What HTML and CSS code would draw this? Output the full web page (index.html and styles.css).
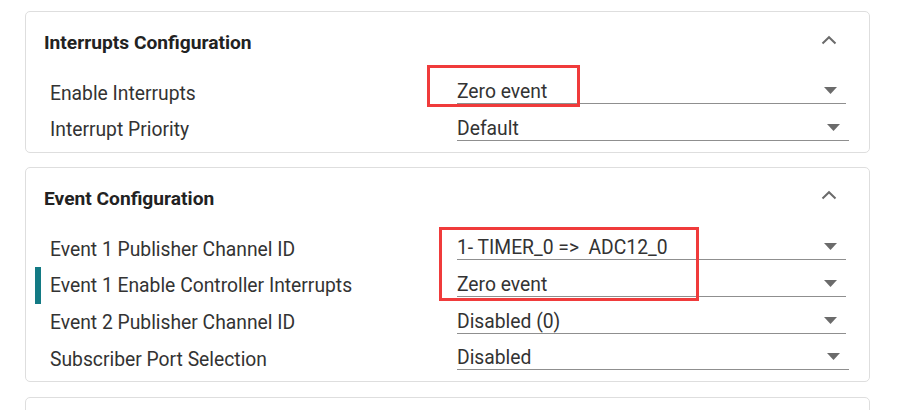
FILE: index.html
```html
<!DOCTYPE html>
<html>
<head>
<meta charset="utf-8">
<link rel="stylesheet" href="styles.css">
</head>
<body>
<div class="page">
  <section class="card">
    <div class="card-header">
      <h2 class="card-title">Interrupts Configuration</h2>
      <svg class="chevron" width="16" height="10" viewBox="0 0 16 10"><polyline points="1.5,8.5 8,2.2 14.5,8.5" fill="none" stroke="#6b6b6b" stroke-width="2"/></svg>
    </div>
    <div class="row">
      <div class="label">Enable Interrupts</div>
      <div class="field"><span class="value">Zero event</span><svg class="drop" width="13" height="7" viewBox="0 0 13 7"><path d="M0 0h13L6.5 7z" fill="#6b6b6b"/></svg></div>
    </div>
    <div class="row">
      <div class="label">Interrupt Priority</div>
      <div class="field wide"><span class="value">Default</span><svg class="drop" width="13" height="7" viewBox="0 0 13 7"><path d="M0 0h13L6.5 7z" fill="#6b6b6b"/></svg></div>
    </div>
  </section>

  <section class="card">
    <div class="card-header">
      <h2 class="card-title">Event Configuration</h2>
      <svg class="chevron" width="16" height="10" viewBox="0 0 16 10"><polyline points="1.5,8.5 8,2.2 14.5,8.5" fill="none" stroke="#6b6b6b" stroke-width="2"/></svg>
    </div>
    <div class="row">
      <div class="label">Event 1 Publisher Channel ID</div>
      <div class="field"><span class="value">1- TIMER_0 =&gt;  ADC12_0</span><svg class="drop" width="13" height="7" viewBox="0 0 13 7"><path d="M0 0h13L6.5 7z" fill="#6b6b6b"/></svg></div>
    </div>
    <div class="row active">
      <span class="marker"></span>
      <div class="label">Event 1 Enable Controller Interrupts</div>
      <div class="field"><span class="value">Zero event</span><svg class="drop" width="13" height="7" viewBox="0 0 13 7"><path d="M0 0h13L6.5 7z" fill="#6b6b6b"/></svg></div>
    </div>
    <div class="row">
      <div class="label">Event 2 Publisher Channel ID</div>
      <div class="field"><span class="value">Disabled (0)</span><svg class="drop" width="13" height="7" viewBox="0 0 13 7"><path d="M0 0h13L6.5 7z" fill="#6b6b6b"/></svg></div>
    </div>
    <div class="row">
      <div class="label">Subscriber Port Selection</div>
      <div class="field wide"><span class="value">Disabled</span><svg class="drop" width="13" height="7" viewBox="0 0 13 7"><path d="M0 0h13L6.5 7z" fill="#6b6b6b"/></svg></div>
    </div>
  </section>

  <section class="card card-next"></section>

  <div class="highlight hl-1"></div>
  <div class="highlight hl-2"></div>
</div>
</body>
</html>
```

FILE: styles.css
```css
html, body {
  margin: 0;
  padding: 0;
  background: #ffffff;
  overflow: hidden;
}

body {
  font-family: Roboto, "Liberation Sans", Arial, sans-serif;
  color: #333333;
  width: 919px;
  height: 410px;
}

.page {
  position: relative;
  padding: 11px 0 0 25px;
  width: 845px;
  height: 399px;
  display: flex;
  flex-direction: column;
  gap: 14px;
  overflow: hidden;
}

.card {
  flex: none;
  border: 1px solid #dedede;
  border-radius: 5px;
  padding-bottom: 7.3px;
  background: #fff;
}

.card-next {
  height: 40px;
  padding: 0;
  margin-top: 0.5px;
}

.card-header {
  height: 59.3px;
  box-sizing: border-box;
  padding: 20px 32px 0 18px;
  display: flex;
  align-items: flex-start;
}

.card-title {
  flex: 1;
  margin: 0;
  font-size: 19.2px;
  line-height: 21px;
  font-weight: 700;
  color: #222222;
}

.chevron {
  margin-top: 2.5px;
}

.row {
  position: relative;
  height: 36.67px;
  display: flex;
  align-items: flex-start;
  padding-left: 24px;
}

.label {
  width: 407px;
  margin-top: 11.5px;
  font-size: 19.3px;
  line-height: 21px;
  color: #333333;
}

.field {
  width: 389px;
  margin-top: 10px;
  display: flex;
  align-items: center;
  justify-content: space-between;
  border-bottom: 1px solid #8f8f8f;
  padding-bottom: 1px;
}

.field.wide {
  width: 392px;
}

.value {
  font-size: 19.3px;
  line-height: 21px;
  color: #333333;
  white-space: pre;
}

.drop {
  margin-right: 9.5px;
  margin-top: -2px;
}

.marker {
  position: absolute;
  left: 9px;
  top: 2.7px;
  width: 6px;
  height: 37px;
  background: #137a84;
}

.highlight {
  position: absolute;
  border: 3px solid #f03b3b;
  box-sizing: border-box;
}

.hl-1 {
  left: 427px;
  top: 65px;
  width: 153px;
  height: 42px;
}

.hl-2 {
  left: 439px;
  top: 227px;
  width: 260px;
  height: 74px;
}
```
